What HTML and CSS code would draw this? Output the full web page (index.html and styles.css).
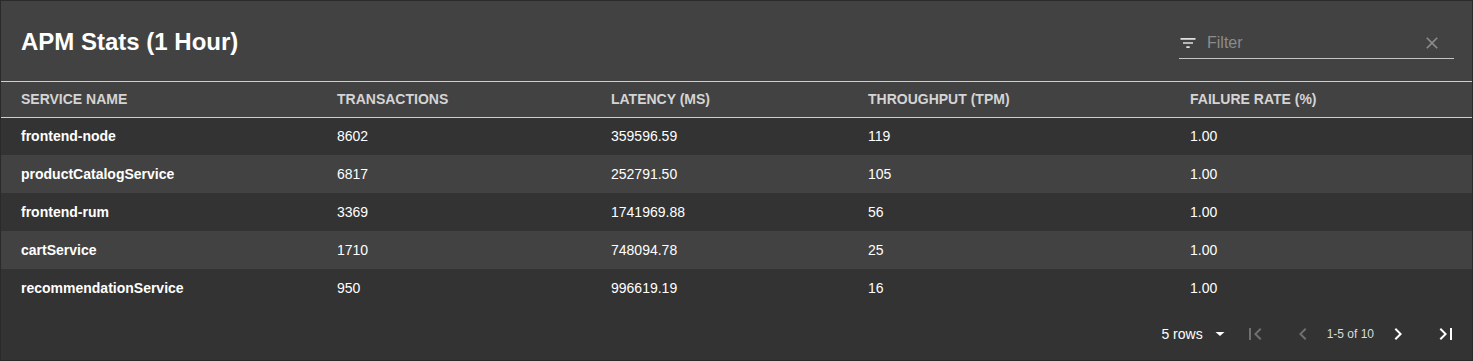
FILE: index.html
```html
<!DOCTYPE html>
<html>
<head>
<meta charset="utf-8">
<link rel="stylesheet" href="styles.css">
</head>
<body>
<div class="card">
  <div class="toolbar">
    <h1 class="title">APM Stats (1 Hour)</h1>
    <div class="filter">
      <svg class="filter-icon" width="20" height="20" viewBox="0 0 24 24"><path fill="#e0e0e0" d="M10 18h4v-2h-4v2zM3 6v2h18V6H3zm3 7h12v-2H6v2z"/></svg>
      <span class="filter-text">Filter</span>
      <svg class="clear-icon" width="20" height="20" viewBox="0 0 24 24"><path fill="#8a8a8a" d="M19 6.41L17.59 5 12 10.59 6.41 5 5 6.41 10.59 12 5 17.59 6.41 19 12 13.41 17.59 19 19 17.59 13.41 12z"/></svg>
    </div>
  </div>
  <table class="grid">
    <thead>
      <tr>
        <th class="c1">SERVICE NAME</th>
        <th class="c2">TRANSACTIONS</th>
        <th class="c3">LATENCY (MS)</th>
        <th class="c4">THROUGHPUT (TPM)</th>
        <th class="c5">FAILURE RATE (%)</th>
      </tr>
    </thead>
    <tbody>
      <tr><td class="name">frontend-node</td><td>8602</td><td>359596.59</td><td>119</td><td>1.00</td></tr>
      <tr><td class="name">productCatalogService</td><td>6817</td><td>252791.50</td><td>105</td><td>1.00</td></tr>
      <tr><td class="name">frontend-rum</td><td>3369</td><td>1741969.88</td><td>56</td><td>1.00</td></tr>
      <tr><td class="name">cartService</td><td>1710</td><td>748094.78</td><td>25</td><td>1.00</td></tr>
      <tr><td class="name">recommendationService</td><td>950</td><td>996619.19</td><td>16</td><td>1.00</td></tr>
    </tbody>
  </table>
  <div class="footer">
    <div class="rows-select">
      <span>5 rows</span>
      <svg width="24" height="24" viewBox="0 0 24 24"><path fill="#ffffff" d="M7.5 10h9L12 14z"/></svg>
    </div>
    <button class="pg"><svg width="24" height="24" viewBox="0 0 24 24"><path fill="#707070" d="M18.41 16.59L13.82 12l4.59-4.59L17 6l-6 6 6 6zM6 6h2v12H6z"/></svg></button>
    <button class="pg"><svg width="24" height="24" viewBox="0 0 24 24"><path fill="#707070" d="M15.41 16.59L10.83 12l4.58-4.59L14 6l-6 6 6 6 1.41-1.41z"/></svg></button>
    <span class="range">1-5 of 10</span>
    <button class="pg"><svg width="24" height="24" viewBox="0 0 24 24"><path fill="#ffffff" d="M8.59 16.59L13.17 12 8.59 7.41 10 6l6 6-6 6-1.41-1.41z"/></svg></button>
    <button class="pg"><svg width="24" height="24" viewBox="0 0 24 24"><path fill="#ffffff" d="M5.59 7.41L10.18 12l-4.59 4.59L7 18l6-6-6-6zM16 6h2v12h-2z"/></svg></button>
  </div>
</div>
</body>
</html>
```
FILE: styles.css
```css
* { box-sizing: border-box; }
html, body { margin: 0; padding: 0; background: #2e2e2e; }
body { font-family: "Liberation Sans", Arial, sans-serif; color: #fff; }
.card {
  width: 1473px;
  height: 361px;
  background: #333333;
  border: 1px solid #2a2a2a;
  display: flex;
  flex-direction: column;
}
.toolbar {
  background: #424242;
  height: 81px;
  flex: none;
  display: flex;
  align-items: flex-start;
  justify-content: space-between;
  padding: 0 18px 0 20px;
  border-bottom: 1px solid #cfcfcf;
}
.title {
  margin: 27px 0 0 0;
  font-size: 24px;
  font-weight: bold;
  line-height: 28px;
  color: #fff;
}
.filter {
  margin-top: 27px;
  width: 275px;
  height: 31px;
  border-bottom: 1px solid #c4c4c4;
  display: flex;
  align-items: center;
}
.filter-icon { margin-left: -1px; margin-right: 9px; }
.filter-text { font-size: 16px; color: #8c8c8c; flex: 1; }
.clear-icon { margin-right: 12px; }
.grid {
  width: 100%;
  border-collapse: collapse;
  table-layout: fixed;
  flex: none;
}
.grid th {
  background: #424242;
  height: 35px;
  text-align: left;
  font-size: 14px;
  font-weight: bold;
  color: #d4d4d4;
  border-bottom: 1px solid #cfcfcf;
  padding: 0;
}
.grid th.c1, .grid td:first-child { padding-left: 20px; }
.grid .c1 { width: 336px; }
.grid .c2 { width: 274px; }
.grid .c3 { width: 257px; }
.grid .c4 { width: 322px; }
.grid td {
  height: 38px;
  font-size: 14px;
  color: #fff;
  padding: 0;
}
.grid tbody tr:nth-child(odd) { background: #333333; }
.grid tbody tr:nth-child(even) { background: #424242; }
.grid td.name { font-weight: bold; }
.footer {
  flex: 1;
  display: flex;
  align-items: center;
  justify-content: flex-end;
  padding: 0 2px 0 0;
}
.rows-select {
  display: flex;
  align-items: center;
  gap: 5px;
  font-size: 14px;
  margin-right: -1px;
}
.pg {
  background: none;
  border: 0;
  padding: 0;
  width: 48px;
  height: 24px;
  display: flex;
  align-items: center;
  justify-content: center;
}
.range { font-size: 12px; color: #dcdcdc; }
```
